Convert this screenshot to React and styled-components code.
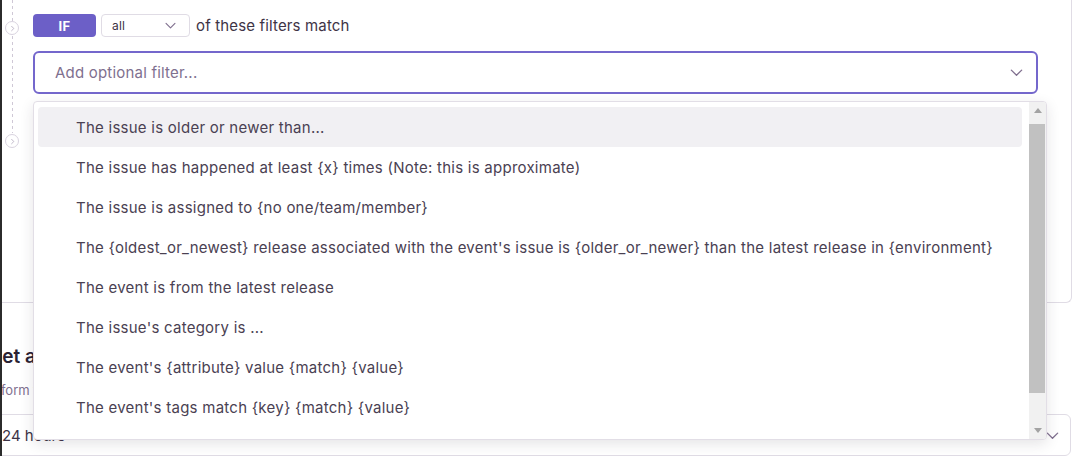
import React from 'react';
import styled, { createGlobalStyle } from 'styled-components';

const GlobalStyle = createGlobalStyle`
  html, body {
    margin: 0;
    padding: 0;
    background: #ffffff;
  }
  body {
    font-family: Inter, "Noto Sans", "Liberation Sans", sans-serif;
    color: #3e3446;
  }
`;

const options = [
  'The issue is older or newer than...',
  'The issue has happened at least {x} times (Note: this is approximate)',
  'The issue is assigned to {no one/team/member}',
  "The {oldest_or_newest} release associated with the event's issue is {older_or_newer} than the latest release in {environment}",
  'The event is from the latest release',
  "The issue's category is ...",
  "The event's {attribute} value {match} {value}",
  "The event's tags match {key} {match} {value}",
  "The event's level is {match} {level}",
];

const Page = styled.div`
  width: 1079px;
  height: 456px;
  box-sizing: border-box;
  border-left: 2px solid #2b2b2b;
  overflow: hidden;
`;

const Inner = styled.div`
  margin-left: -26px;
  margin-right: 7px;
`;

const Card = styled.div`
  background: #fff;
  border: 1px solid #e0dce5;
  border-top: none;
  border-radius: 0 0 6px 6px;
  padding: 14px 33px 95px 24px;
`;

const Step = styled.div`
  display: grid;
  grid-template-columns: 22px 1fr;
  column-gap: 10px;
  margin-top: ${(p) => (p.$first ? '0' : '33px')};
`;

const Rail = styled.div`
  display: flex;
  justify-content: center;
  align-items: flex-start;
  margin-top: ${(p) => (p.$line ? '-14px' : '0')};
  padding-top: ${(p) => (p.$line ? '14px' : '0')};
  margin-bottom: ${(p) => (p.$line ? '-39px' : '0')};
  background: ${(p) =>
    p.$line
      ? 'repeating-linear-gradient(to bottom, #cfc8d6 0 3px, transparent 3px 6px) center / 1px 100% no-repeat'
      : 'none'};
`;

const StepIcon = styled.div`
  margin-top: 7px;
  width: 14px;
  height: 14px;
  box-sizing: border-box;
  border: 1px solid #d9d3df;
  border-radius: 50%;
  background: #fff;
  display: flex;
  align-items: center;
  justify-content: center;
  color: #bdb4c7;
`;

const StepBody = styled.div`
  display: flex;
  flex-direction: column;
  gap: 14px;
`;

const Conditions = styled.div`
  display: flex;
  align-items: center;
  gap: 5px;
  height: 23px;
`;

const Badge = styled.div`
  width: 63px;
  height: 23px;
  border-radius: 4px;
  background: ${(p) => p.$color || '#6c5fc7'};
  color: #fff;
  font-weight: 700;
  font-size: 13px;
  display: flex;
  align-items: center;
  justify-content: center;
  letter-spacing: 0.4px;
`;

const SmallSelect = styled.div`
  width: 89px;
  height: 23px;
  box-sizing: border-box;
  border: 1px solid #e0dce5;
  border-radius: 4px;
  display: flex;
  align-items: center;
  justify-content: space-between;
  padding: 0 12px 0 10px;
  font-size: 12px;
  letter-spacing: 0.2px;
  color: #3e3446;
`;

const Caption = styled.span`
  font-size: 15px;
  letter-spacing: 0.15px;
  color: #3e3446;
  margin-left: 1px;
`;

const FilterField = styled.div`
  position: relative;
`;

const Input = styled.div`
  height: 43px;
  box-sizing: border-box;
  border: 2px solid ${(p) => (p.$focused ? '#7467cc' : '#e0dce5')};
  border-radius: 6px;
  display: flex;
  align-items: center;
  justify-content: space-between;
  padding: 0 12px 0 20px;
  font-size: 15px;
  letter-spacing: 0.2px;
  color: #80708f;
`;

const Menu = styled.div`
  position: absolute;
  top: calc(100% + 7px);
  left: 0;
  right: -9px;
  height: 339px;
  box-sizing: border-box;
  background: #fff;
  border: 1px solid #e2dee6;
  border-radius: 4px;
  box-shadow: 0 4px 14px rgba(43, 34, 51, 0.12);
  display: flex;
  overflow: hidden;
  z-index: 10;
`;

const MenuList = styled.div`
  flex: 1;
  padding: 5px 7px 0 4px;
  overflow: hidden;
`;

const MenuItem = styled.div`
  height: 40px;
  display: flex;
  align-items: center;
  padding-left: 38px;
  border-radius: 4px;
  font-size: 15px;
  letter-spacing: 0.25px;
  color: #4a4152;
  white-space: nowrap;
  background: ${(p) => (p.$active ? '#f1f0f3' : 'transparent')};
`;

const Scrollbar = styled.div`
  width: 17px;
  background: #f1f1f1;
  display: flex;
  flex-direction: column;
`;

const ScrollButton = styled.div`
  height: 17px;
  display: flex;
  align-items: center;
  justify-content: center;
`;

const Track = styled.div`
  flex: 1;
  padding: 5px 0 29px;
  display: flex;
`;

const Thumb = styled.div`
  flex: 1;
  background: #c1c1c1;
  margin-right: 1px;
`;

const Section = styled.div`
  padding: 42px 1px 0 14px;
`;

const Heading = styled.h3`
  margin: 0;
  font-size: 19px;
  line-height: 24px;
  font-weight: 600;
  color: #2b2233;
`;

const Description = styled.p`
  margin: 12px 0 0 -10px;
  font-size: 13px;
  line-height: 18px;
  color: #80708f;
`;

const IntervalSelect = styled.div`
  margin-top: 15px;
  height: 42px;
  box-sizing: border-box;
  border: 1px solid #e0dce5;
  border-radius: 6px;
  display: flex;
  align-items: center;
  justify-content: space-between;
  padding: 0 10px 0 11px;
  font-size: 15px;
  color: #3e3446;
`;

const Chevron = ({ size = 12, color = '#80708f' }) => (
  <svg width={size} height={size} viewBox="0 0 16 16" fill="none">
    <path d="M2.5 5.5 8 11l5.5-5.5" stroke={color} strokeWidth="1.4" strokeLinecap="round" strokeLinejoin="round" />
  </svg>
);

const RightChevron = () => (
  <svg width="7" height="7" viewBox="0 0 8 8" fill="none">
    <path d="M3 1.5 5.5 4 3 6.5" stroke="currentColor" strokeWidth="1.1" strokeLinecap="round" strokeLinejoin="round" />
  </svg>
);

const Arrow = ({ down }) => (
  <svg width="8" height="5" viewBox="0 0 8 5">
    <path d={down ? 'M0 0h8L4 5z' : 'M0 5h8L4 0z'} fill="#a3a3a3" />
  </svg>
);

const App = () => (
  <Page>
    <GlobalStyle />
    <Inner>
      <Card>
        <Step $first>
          <Rail $line>
            <StepIcon>
              <RightChevron />
            </StepIcon>
          </Rail>
          <StepBody>
            <Conditions>
              <Badge>IF</Badge>
              <SmallSelect>
                all
                <Chevron size={13} />
              </SmallSelect>
              <Caption>of these filters match</Caption>
            </Conditions>
            <FilterField>
              <Input $focused>
                Add optional filter...
                <Chevron size={15} />
              </Input>
              <Menu>
                <MenuList>
                  {options.map((o, i) => (
                    <MenuItem key={o} $active={i === 0}>
                      {o}
                    </MenuItem>
                  ))}
                </MenuList>
                <Scrollbar>
                  <ScrollButton>
                    <Arrow />
                  </ScrollButton>
                  <Track>
                    <Thumb />
                  </Track>
                  <ScrollButton>
                    <Arrow down />
                  </ScrollButton>
                </Scrollbar>
              </Menu>
            </FilterField>
          </StepBody>
        </Step>
        <Step>
          <Rail>
            <StepIcon>
              <RightChevron />
            </StepIcon>
          </Rail>
          <StepBody>
            <Conditions>
              <Badge>THEN</Badge>
              <Caption>perform these actions</Caption>
            </Conditions>
            <Input>
              Add action...
              <Chevron size={15} />
            </Input>
          </StepBody>
        </Step>
      </Card>
      <Section>
        <Heading>Set action interval</Heading>
        <Description>Perform the actions above once this often for an issue</Description>
        <IntervalSelect>
          24 hours
          <Chevron size={15} />
        </IntervalSelect>
      </Section>
    </Inner>
  </Page>
);

export default App;
